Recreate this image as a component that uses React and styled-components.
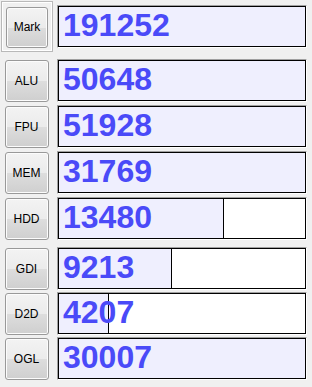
import React from 'react';
import styled, { createGlobalStyle } from 'styled-components';

const Global = createGlobalStyle`
    html, body {
        margin: 0;
        padding: 0;
        background: #f0f0f0;
        font-family: "Liberation Sans", Arial, sans-serif;
    }
`;

const Panel = styled.div`
    width: 312px;
    height: 387px;
    padding-top: 1px;
    box-sizing: border-box;
`;

const Row = styled.div`
    display: grid;
    grid-template-columns: 53px 250px;
    column-gap: 4px;
    align-items: center;
    margin-top: ${props => props.gap || 0}px;
`;

const MarkFrame = styled.div`
    margin-left: 1px;
    width: 52px;
    height: 51px;
    box-sizing: border-box;
    border: 1px solid #b9b9b9;
    box-shadow: inset 1px 1px 0 #fff, inset -1px -1px 0 #fff;
    display: flex;
    align-items: center;
    justify-content: center;
    padding-top: 1px;
`;

const Button = styled.button`
    width: ${props => props.w || '44px'};
    height: ${props => props.h || '42px'};
    justify-self: center;
    margin: 0;
    padding: 0;
    border: 1px solid #999;
    border-radius: 3px;
    background: linear-gradient(#f3f3f3 0%, #ebebeb 50%, #dddddd 51%, #cfcfcf 100%);
    box-shadow: inset 0 0 0 1px #fcfcfc;
    font-family: "Liberation Sans", Arial, sans-serif;
    font-size: 12px;
    color: #000;
`;

const Meter = styled.div`
    height: 43px;
    box-sizing: border-box;
    border: 1px solid;
    border-color: #a0a0a0 #fff #fff #a0a0a0;
`;

const Track = styled.div`
    position: relative;
    height: 100%;
    box-sizing: border-box;
    border: 1px solid #000;
    background: #fff;
    display: flex;
`;

const Fill = styled.div`
    height: 100%;
    background: #efeffe;
    box-sizing: border-box;
    border-right: ${props => props.full ? 'none' : '1px solid #000'};
`;

const Value = styled.span`
    position: absolute;
    left: 4px;
    top: 0;
    bottom: 2px;
    display: flex;
    align-items: center;
    font-family: "Liberation Sans", Arial, sans-serif;
    font-weight: bold;
    font-size: 32px;
    color: #4a4af8;
`;

const rows = [
    { label: 'ALU', value: '50648', fill: 1, gap: 7 },
    { label: 'FPU', value: '51928', fill: 1, gap: 3 },
    { label: 'MEM', value: '31769', fill: 1, gap: 3 },
    { label: 'HDD', value: '13480', fill: 0.672, gap: 3 },
    { label: 'GDI', value: '9213', fill: 0.458, gap: 7 },
    { label: 'D2D', value: '4207', fill: 0.204, gap: 2 },
    { label: 'OGL', value: '30007', fill: 1, gap: 2 },
];

function Bar({ value, fill }) {
    const full = fill >= 1;
    return (
        <Meter>
            <Track>
                <Fill full={full} style={{ width: `${fill * 100}%` }} />
                <Value>{value}</Value>
            </Track>
        </Meter>
    );
}

export default function App() {
    return (
        <Panel>
            <Global />
            <Row>
                <MarkFrame>
                    <Button w="42px" h="41px">Mark</Button>
                </MarkFrame>
                <Bar value="191252" fill={1} />
            </Row>
            {rows.map(r => (
                <Row key={r.label} gap={r.gap}>
                    <Button>{r.label}</Button>
                    <Bar value={r.value} fill={r.fill} />
                </Row>
            ))}
        </Panel>
    );
}
